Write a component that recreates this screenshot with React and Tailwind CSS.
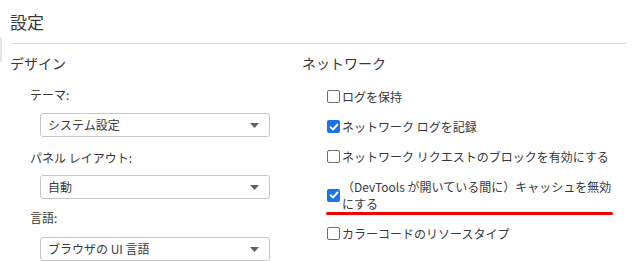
import React from "react";

const font = { fontFamily: '"Noto Sans CJK JP", "Noto Sans", sans-serif' };

function Select({ value, className = "" }) {
  return (
    <div
      className={`ml-[10px] w-[230px] h-[24px] border border-[#c6c6c6] rounded-[3px] bg-white flex items-center justify-between pl-[7px] pr-[8px] text-[12px] text-[#383838] ${className}`}
    >
      <span className="leading-[18px]">{value}</span>
      <svg width="9" height="5" viewBox="0 0 9 5" className="mr-[2px]">
        <path d="M0 0 H9 L4.5 5 Z" fill="#5f5f5f" />
      </svg>
    </div>
  );
}

function Checkbox({ checked }) {
  if (checked) {
    return (
      <span className="shrink-0 w-[13px] h-[13px] rounded-[2px] bg-[#1a73e8] flex items-center justify-center">
        <svg width="10" height="10" viewBox="0 0 10 10">
          <path d="M1.6 5.2 L4 7.5 L8.5 2.5" stroke="white" strokeWidth="1.9" fill="none" strokeLinecap="round" strokeLinejoin="round" />
        </svg>
      </span>
    );
  }
  return <span className="shrink-0 w-[13px] h-[13px] rounded-[2px] border border-[#6e6e6e] bg-white" />;
}

function Item({ checked, children, className = "" }) {
  return (
    <div className={`flex items-center ml-[25px] ${className}`}>
      <Checkbox checked={checked} />
      <span className="ml-[2px] text-[12px] leading-[17px] text-[#383838]">{children}</span>
    </div>
  );
}

export default function App() {
  return (
    <div className="relative w-[633px] h-[261px] overflow-hidden bg-white" style={font}>
      <div className="absolute left-0 top-[37px] w-[2px] h-[25px] bg-[#e6e6e6]" />
      <div className="mx-[10px] pt-[10px] pb-[9px] border-b border-[#d5dcea] mr-[7px]">
        <div className="text-[17px] leading-[24px] text-[#383838]">設定</div>
      </div>
      <div className="flex">
        <div className="w-[302px] shrink-0 pl-[10px] pt-[9px]">
          <div className="text-[14px] leading-[20px] text-[#383838]">デザイン</div>
          <div className="ml-[20px]">
            <div className="mt-[13px] text-[12px] leading-[18px] text-[#383838]">テーマ:</div>
            <Select value="システム設定" className="mt-[9px]" />
            <div className="mt-[12px] text-[12px] leading-[18px] text-[#383838]">パネル レイアウト:</div>
            <Select value="自動" className="mt-[8px]" />
            <div className="mt-[10px] text-[12px] leading-[18px] text-[#383838]">言語:</div>
            <Select value="ブラウザの UI 言語" className="mt-[10px]" />
          </div>
        </div>
        <div className="flex-1 pt-[9px]">
          <div className="text-[14px] leading-[20px] text-[#383838]">ネットワーク</div>
          <Item checked={false} className="mt-[15px]">ログを保持</Item>
          <Item checked={true} className="mt-[13px]">ネットワーク ログを記録</Item>
          <Item checked={false} className="mt-[13px]">ネットワーク リクエストのブロックを有効にする</Item>
          <Item checked={true} className="mt-[13px]">
            （DevTools が開いている間に）キャッシュを無効
            <br />
            にする
          </Item>
          <Item checked={false} className="mt-[13px]">カラーコードのリソースタイプ</Item>
        </div>
      </div>
      <div className="absolute left-[326px] top-[212px] w-[287px] h-[3px] rounded-full bg-[#f00000]" />
    </div>
  );
}
